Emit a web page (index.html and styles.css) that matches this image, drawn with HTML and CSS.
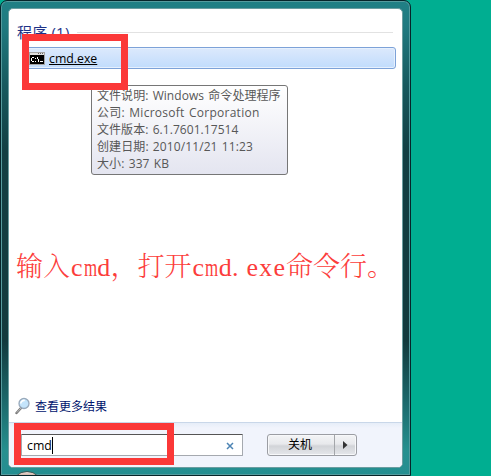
FILE: index.html
```html
<!DOCTYPE html>
<html lang="zh-CN">
<head>
<meta charset="utf-8">
<title>开始菜单</title>
<link rel="stylesheet" href="styles.css">
</head>
<body>
<div class="window">
  <main class="panel">
    <section class="results">
      <div class="group"><h1>程序 (1)</h1><span class="rule"></span></div>
      <div class="result">
        <svg class="exe" width="16" height="13" viewBox="0 0 16 13" shape-rendering="crispEdges">
          <path fill="#a5a5a5" d="M0 0h16v13H0z"/><path fill="#dedede" d="M1 1h14v2H1z"/><path fill="#666" d="M9 1h1v1H9zM11 1h1v1h-1zM13 1h1v1h-1z"/><path fill="#000" d="M1 3h14v9H1z"/>
          <path fill="#fff" d="M3 5h2v1H3zM2 6h1v3H2zM3 9h2v1H3zM6 6h1v1H6zM6 9h1v1H6zM8 5h1v2H8zM9 7h1v3H9zM11 9h3v1h-3z"/>
        </svg>
        <span class="name">cmd.exe</span>
      </div>
      <a class="more">
        <svg width="16" height="18" viewBox="0 0 16 18"><path d="M6 11 1.5 16" stroke="#777" stroke-width="2.4" stroke-linecap="round"/><path d="M6 11 1.8 15.6" stroke="#ccc" stroke-width=".8"/><circle cx="9" cy="6.5" r="5" fill="#c4e4fb" stroke="#98a9bb" stroke-width="1.3"/><path d="M5.8 6.5a3.2 3.2 0 0 1 4-3" stroke="#fff" stroke-width="1.6" fill="none"/></svg>
        <span>查看更多结果</span>
      </a>
    </section>
    <footer class="footer">
      <div class="search"><span class="query">cmd</span><span class="caret"></span>
        <svg class="clear" width="8" height="8" viewBox="0 0 8 8"><path d="M1 1l6 6M7 1 1 7" stroke="#4d84b4" stroke-width="1.5"/></svg>
      </div>
      <div class="power"><span class="shutdown">关机</span><span class="arrow"><svg width="5" height="8" viewBox="0 0 5 8"><path fill="#333" d="M0 0l4.5 4L0 8z"/></svg></span></div>
    </footer>
  </main>
  <div class="orb"></div>
</div>
<div class="tooltip">
  <p class="l1">文件说明: Windows 命令处理程序</p>
  <p class="l2">公司: Microsoft Corporation</p>
  <p class="l3">文件版本: 6.1.7601.17514</p>
  <p class="l4">创建日期: 2010/11/21 11:23</p>
  <p class="l5">大小: 337 KB</p>
</div>
<div class="note">输入<b>c</b><b class="wide">m</b><b>d</b>，打开<b>c</b><b class="wide">m</b><b>d</b><b class="dot">.</b><b>e</b><b>x</b><b>e</b>命令行。</div>
<div class="mark mark-result"></div>
<div class="mark mark-search"></div>
</body>
</html>
```
FILE: styles.css
```css
* { box-sizing: border-box; }
body {
  margin: 0;
  width: 491px;
  height: 476px;
  overflow: hidden;
  position: relative;
  background: #00ae91;
  font: 12px/17px "Open Sans", "Noto Sans CJK SC", sans-serif;
}
.window {
  position: relative;
  width: 411px;
  height: 476px;
  padding: 7px;
  border: 1px solid #06252a;
  border-radius: 7px 7px 0 0;
  overflow: hidden;
  background: linear-gradient(#208085 0, #207a80 25px, #17595e 85px, #123f43 150px, #123a3d 340px, #1b686b 400px, #26908f 450px, #258e91 100%);
  box-shadow: inset 0 0 0 1px #559b9e;
}
.panel {
  display: flex;
  flex-direction: column;
  width: 395px;
  height: 460px;
  border: 1px solid #6b9da0;
  border-radius: 5px;
  overflow: hidden;
  background: #fff;
}
.results { display: flex; flex-direction: column; height: 413px; }
.group {
  display: flex;
  align-items: center;
  gap: 7px;
  height: 18px;
  margin: 14px 9px 0 8px;
}
.group h1 {
  margin: 0;
  font-size: 15px;
  font-weight: 400;
  line-height: 18px;
  letter-spacing: .2px;
  color: #1e3287;
  white-space: nowrap;
}
.rule { flex: 1; height: 1px; margin-top: 1px; background: #e2e2e2; }
.result {
  display: flex;
  align-items: center;
  gap: 4px;
  height: 22px;
  margin: 6px 6px 0 13px;
  padding-left: 6px;
  border: 1px solid #7da2d8;
  border-radius: 3px;
  background: linear-gradient(#dce9fc, #c1dcfc);
  box-shadow: inset 0 0 0 1px #e6f0fd;
}
.name { font-size: 12.3px; text-decoration: underline; color: #000; }
.more {
  display: flex;
  align-items: center;
  gap: 4px;
  margin: auto 0 7px 6px;
  color: #00146e;
}
.footer {
  display: flex;
  flex: 1;
  align-items: flex-start;
  padding: 11px 0 0 12px;
  border-top: 1px solid #c9d7e9;
  background: linear-gradient(#e6edf8, #f1f4fc 5px);
}
.search {
  display: flex;
  align-items: center;
  width: 222px;
  height: 22px;
  padding: 0 8px 0 5px;
  border: 1px solid #a5a9af;
  border-top-color: #555;
  border-radius: 1px;
  background: #fff;
}
.query { font-size: 12.3px; }
.caret { width: 1px; height: 17px; background: #000; }
.clear { margin-left: auto; margin-top: 2px; }
.power {
  display: flex;
  width: 90px;
  height: 22px;
  margin-left: 24px;
  border: 1px solid #9b9da3;
  border-radius: 3px;
  background: linear-gradient(#f3f4f6 0, #e8e9ec 45%, #d2d4d8 55%, #e5e7eb 100%);
  box-shadow: inset 0 0 0 1px #f7f8fa;
}
.shutdown { width: 67px; padding-right: 2px; text-align: center; line-height: 19px; border-right: 1px solid #a4a6aa; }
.arrow { display: flex; flex: 1; align-items: center; justify-content: center; }
.orb {
  position: absolute;
  left: 10px;
  top: 470px;
  width: 32px;
  height: 32px;
  border: 1px solid #3d5853;
  border-radius: 50%;
  background: linear-gradient(#e8dcd5, #bd8878 7px);
}
.tooltip {
  position: absolute;
  left: 91px;
  top: 85px;
  width: 197px;
  height: 90px;
  padding: 1px 5px;
  border: 1px solid #767676;
  border-radius: 3px;
  background: linear-gradient(#fff, #e4e5f0);
  color: #575757;
  word-spacing: 1px;
}
.tooltip p { margin: 0; white-space: nowrap; }
.l1, .l3 { letter-spacing: .06px; }
.l2 { letter-spacing: .26px; }
.l4, .l5 { letter-spacing: .1px; }
.note {
  position: absolute;
  left: 16px;
  top: 247px;
  font: 27px/36px "Noto Serif CJK SC", "Noto Sans CJK SC", serif;
  font-weight: 300;
  color: #fc3d3b;
  white-space: nowrap;
}
.note b {
  display: inline-block;
  width: 13.5px;
  font-family: "Liberation Serif", serif;
  font-size: 26px;
  font-weight: 400;
  text-align: center;
}
.note .wide { transform: scaleX(.65); transform-origin: 0 50%; }
.note .dot { text-align: left; }
.mark { position: absolute; border: 7px solid #fb3838; }
.mark-result { left: 22px; top: 34px; width: 106px; height: 56px; }
.mark-search { left: 14px; top: 423px; width: 160px; height: 42px; }
```
